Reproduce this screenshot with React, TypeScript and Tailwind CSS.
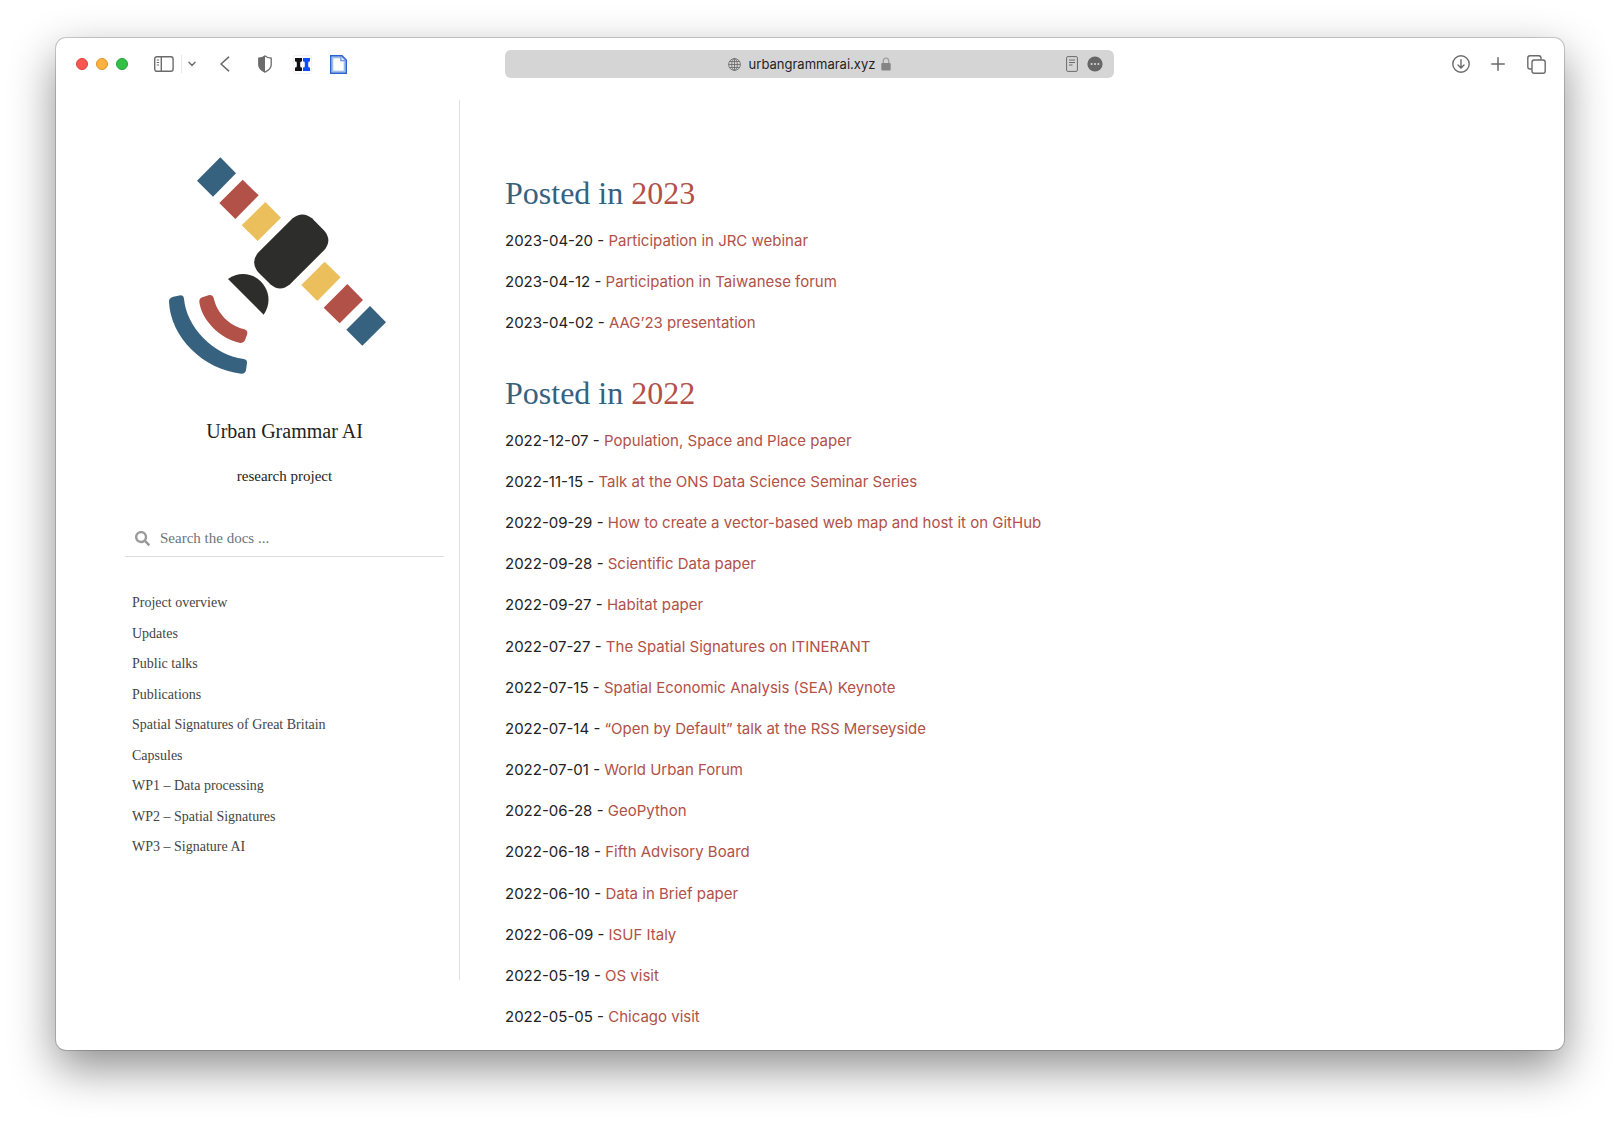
import React from "react";
import { FaSearch } from "react-icons/fa";

type Post = { date: string; title: string };
type Year = { year: string; posts: Post[] };

const years: Year[] = [
  {
    year: "2023",
    posts: [
      { date: "2023-04-20", title: "Participation in JRC webinar" },
      { date: "2023-04-12", title: "Participation in Taiwanese forum" },
      { date: "2023-04-02", title: "AAG’23 presentation" },
    ],
  },
  {
    year: "2022",
    posts: [
      { date: "2022-12-07", title: "Population, Space and Place paper" },
      { date: "2022-11-15", title: "Talk at the ONS Data Science Seminar Series" },
      { date: "2022-09-29", title: "How to create a vector-based web map and host it on GitHub" },
      { date: "2022-09-28", title: "Scientific Data paper" },
      { date: "2022-09-27", title: "Habitat paper" },
      { date: "2022-07-27", title: "The Spatial Signatures on ITINERANT" },
      { date: "2022-07-15", title: "Spatial Economic Analysis (SEA) Keynote" },
      { date: "2022-07-14", title: "“Open by Default” talk at the RSS Merseyside" },
      { date: "2022-07-01", title: "World Urban Forum" },
      { date: "2022-06-28", title: "GeoPython" },
      { date: "2022-06-18", title: "Fifth Advisory Board" },
      { date: "2022-06-10", title: "Data in Brief paper" },
      { date: "2022-06-09", title: "ISUF Italy" },
      { date: "2022-05-19", title: "OS visit" },
      { date: "2022-05-05", title: "Chicago visit" },
    ],
  },
];

const navItems = [
  "Project overview",
  "Updates",
  "Public talks",
  "Publications",
  "Spatial Signatures of Great Britain",
  "Capsules",
  "WP1 – Data processing",
  "WP2 – Spatial Signatures",
  "WP3 – Signature AI",
];

function Logo() {
  return (
    <svg viewBox="57 51 696 651" className="h-[217px] w-[232px]" role="img" aria-label="Satellite logo">
      <g fill="#36617f">
        <path d="M211 52 258 100 189 170 141 122Z" />
        <path d="M660 498 708 547 637 617 589 569Z" />
        <path d="M70 470 92 466Q100 466 102 476C109 560 190 646 281 657Q292 659 291 669L288 691Q285 702 274 701C160 690 60 590 57 484Q57 473 70 470Z" />
      </g>
      <g fill="#b15147">
        <path d="M278 119 326 166 256 237 208 189Z" />
        <path d="M592 432 639 480 569 550 521 503Z" />
        <path d="M157 472 178 465Q188 464 191 474C201 520 237 556 283 568Q293 571 292 581L285 601Q281 610 271 609C210 597 155 540 148 486Q147 476 157 472Z" />
      </g>
      <g fill="#ebc05c">
        <path d="M346 186 393 233 323 303 275 256Z" />
        <path d="M524 365 572 412 502 483 454 435Z" />
      </g>
      <g fill="#2d2d2b">
        <path d="M428 235Q457 212 486 235L523 272Q547 300 523 330L420 433Q390 458 361 433L324 396Q301 367 324 338Z" />
        <path d="M234 417C263 396 303 396 331 423C359 451 364 491 341 524Z" />
      </g>
    </svg>
  );
}

const iconButton = "flex items-center justify-center text-[#6b6b6b]";

function Toolbar() {
  return (
    <header className="grid h-[52px] grid-cols-[minmax(0,1fr)_minmax(0,609px)_minmax(0,1fr)] items-center pr-px">
      <div className="flex items-center pl-5">
        <div className="flex gap-2">
          <button aria-label="Close" className="size-3 rounded-full border border-[#d9413b] bg-[#fc5650]" />
          <button aria-label="Minimize" className="size-3 rounded-full border border-[#d9922e] bg-[#fdb33e]" />
          <button aria-label="Zoom" className="size-3 rounded-full border border-[#23a035] bg-[#30c146]" />
        </div>
        <button aria-label="Toggle sidebar" className={iconButton + " ml-[26px]"}>
          <svg width="20" height="16" viewBox="0 0 20 16" fill="none" stroke="currentColor" strokeWidth="1.4">
            <rect x="0.7" y="0.7" width="18.4" height="14.6" rx="2.2" />
            <path d="M7.3 1v14" />
            <path d="M2.7 4h2.4M2.7 6.5h2.4M2.7 9h2.4" strokeWidth="1" />
          </svg>
        </button>
        <span className="ml-[7px] h-[18px] w-px bg-[#e8e8e8]" />
        <button aria-label="Tab groups" className={iconButton + " ml-1.5"}>
          <svg width="8" height="6" viewBox="0 0 8 6" fill="none" stroke="currentColor" strokeWidth="1.4" strokeLinecap="round" strokeLinejoin="round">
            <path d="M1 1.3 4 4.5 7 1.3" />
          </svg>
        </button>
        <button aria-label="Back" className={iconButton + " ml-6"}>
          <svg width="10" height="16" viewBox="0 0 10 16" fill="none" stroke="currentColor" strokeWidth="1.6" strokeLinecap="round" strokeLinejoin="round">
            <path d="M8.6 1.2 1 8l7.6 6.8" />
          </svg>
        </button>
        <button aria-label="Privacy report" className={iconButton + " ml-7"}>
          <svg width="14" height="18" viewBox="0 0 14 18">
            <path d="M7 .9C8.7 2.2 10.9 2.9 13.2 3.1V9.8C13.2 13 10.5 15.6 7 17.1 3.5 15.6.8 13 .8 9.8V3.1C3.1 2.9 5.3 2.2 7 .9Z" fill="none" stroke="currentColor" strokeWidth="1.3" />
            <path d="M7 .9V17.1C3.5 15.6.8 13 .8 9.8V3.1C3.1 2.9 5.3 2.2 7 .9Z" fill="currentColor" />
          </svg>
        </button>
        <button aria-label="Reference extension" className={iconButton + " ml-[21px]"}>
          <svg width="19" height="19" viewBox="0 0 19 19">
            <rect x="0.5" y="0.5" width="18" height="18" rx="1" fill="#fff" stroke="#ececec" strokeWidth="0.7" />
            <path d="M2 3h7v3.4H7.7L7.2 8v3l.5 1.5H9V16H2v-3.500h1.300L3.800 11V8l-.5-1.600H2Z" fill="#111" />
            <path d="M10 3h7v3.400h-1.300L15.200 8v3l.5 1.500H17V16h-7v-3.500h1.300l.5-1.500V8l-.5-1.600H10Z" fill="#0a50ff" />
          </svg>
        </button>
        <button aria-label="Page extension" className={iconButton + " ml-[18px]"}>
          <svg width="17" height="19" viewBox="0 0 17 19">
            <path d="M.7.7H12L16.300 5V18.300H.7Z" fill="#b5cdf3" stroke="#2a62d0" strokeWidth="1.4" />
            <path d="M2.800 2.800H10.500V6H14.200V16.200H2.800Z" fill="#fff" stroke="#86a5de" strokeWidth="0.8" />
            <path d="M11 1.200V5.500H15.800Z" fill="#dfe9fb" stroke="#5d8ae0" strokeWidth="0.8" />
          </svg>
        </button>
      </div>

      <div className="grid h-7 grid-cols-[1fr_auto_1fr] items-center rounded-md bg-[#d5d5d5] px-[11px]">
        <div className="col-start-2 flex items-center">
          <svg width="13" height="13" viewBox="0 0 13 13" fill="none" stroke="#6e6e6e" strokeWidth="0.9" aria-hidden="true">
            <circle cx="6.5" cy="6.5" r="5.9" />
            <ellipse cx="6.5" cy="6.5" rx="2.8" ry="5.9" />
            <path d="M6.5.6v11.8M.6 6.5h11.8M1.600 3.500h9.800M1.600 9.500h9.800" />
          </svg>
          <a href="#" className="ml-2 font-[Inter,sans-serif] text-[13px] leading-5 text-[#1e1e1e]">urbangrammarai.xyz</a>
          <svg className="ml-1.5" width="10" height="14" viewBox="0 0 10 14" aria-hidden="true">
            <path d="M2.300 6.500V4a2.700 2.900 0 0 1 5.400 0v2.500" fill="none" stroke="#a0a0a0" strokeWidth="1.4" />
            <rect x="0.3" y="6" width="9.4" height="7.5" rx="1" fill="#858585" />
          </svg>
        </div>
        <div className="flex items-center justify-end gap-[9px]">
          <button aria-label="Show reader" className={iconButton}>
            <svg width="12" height="16" viewBox="0 0 12 16" fill="none" stroke="currentColor" strokeWidth="1">
              <rect x="0.6" y="0.6" width="10.8" height="14.8" rx="1.3" />
              <path d="M3 4h6M3 6.500h6M3 9h3.500" />
            </svg>
          </button>
          <button aria-label="Page settings" className={iconButton}>
            <svg width="16" height="16" viewBox="0 0 16 16">
              <circle cx="8" cy="8" r="7.6" fill="#666" />
              <g fill="#d5d5d5">
                <circle cx="4.6" cy="8" r="1.1" />
                <circle cx="8" cy="8" r="1.1" />
                <circle cx="11.4" cy="8" r="1.1" />
              </g>
            </svg>
          </button>
        </div>
      </div>

      <div className="flex items-center justify-end pr-[17px]">
        <button aria-label="Downloads" className={iconButton}>
          <svg width="18" height="18" viewBox="0 0 18 18" fill="none" stroke="currentColor" strokeWidth="1.4" strokeLinecap="round" strokeLinejoin="round">
            <circle cx="9" cy="9" r="8.2" />
            <path d="M9 4.800v8M6 9.900l3 3 3-3" />
          </svg>
        </button>
        <button aria-label="New tab" className={iconButton + " ml-[21px]"}>
          <svg width="14" height="14" viewBox="0 0 14 14" fill="none" stroke="currentColor" strokeWidth="1.5" strokeLinecap="round">
            <path d="M7 .8v12.400M.8 7h12.400" />
          </svg>
        </button>
        <button aria-label="Tab overview" className={iconButton + " ml-[22px]"}>
          <svg width="19" height="19" viewBox="0 0 19 19" fill="none" stroke="currentColor" strokeWidth="1.4" strokeLinejoin="round">
            <rect x="5" y="5" width="13.2" height="13.2" rx="2.2" />
            <path d="M4.800 14H3A2.200 2.200 0 0 1 .8 11.800V3A2.200 2.200 0 0 1 3 .8h8.800A2.200 2.200 0 0 1 14 3v1.800" />
          </svg>
        </button>
      </div>
    </header>
  );
}

function Sidebar() {
  return (
    <aside className="mt-2.5 mb-[70px] w-[404px] shrink-0 border-r border-[#dedede] pt-[57px] pr-[15px] pl-[69px] font-['Liberation_Serif',serif]">
      <div className="flex flex-col items-center text-[#222]">
        <Logo />
        <h1 className="mt-[42px] text-[20px] leading-[30px]">Urban Grammar AI</h1>
        <p className="mt-[18px] text-[15px] leading-6">research project</p>
      </div>
      <form className="mt-8 flex h-[37px] items-center border-b border-[#dcdcdc] pl-2.5">
        <label htmlFor="search" aria-label="Search">
          <FaSearch className="size-[15px] text-[#9a9a9a]" />
        </label>
        <input
          id="search"
          type="text"
          placeholder="Search the docs ..."
          className="ml-2.5 w-full min-w-0 flex-1 bg-transparent text-[15px] leading-6 outline-none placeholder:text-[#6c757d]"
        />
      </form>
      <nav className="mt-[34px] pl-[7px]">
        <ul className="flex flex-col gap-1.5 text-[14px] leading-[1.75] text-[#444]">
          {navItems.map((item) => (
            <li key={item}>
              <a href="#">{item}</a>
            </li>
          ))}
        </ul>
      </nav>
    </aside>
  );
}

export default function App() {
  return (
    <div className="flex min-h-screen bg-white px-14 pt-[38px] pb-[74px]">
      <div className="flex min-w-0 flex-1 flex-col rounded-[10px] bg-white shadow-[0_0_0_1px_rgba(0,0,0,0.18),0_18px_46px_rgba(0,0,0,0.45)]">
        <Toolbar />
        <div className="flex flex-1">
          <Sidebar />
          <main className="min-w-0 flex-1 pt-[85px] pl-[45px] font-[Inter,sans-serif] text-[15px] text-[#222]">
            {years.map(({ year, posts }) => (
              <section key={year} className="mb-[39px] last:mb-0">
                <h2 className="font-['Liberation_Serif',serif] text-[32px] leading-9 text-[#36617f]">
                  Posted in <a href="#" className="text-[#b15147]">{year}</a>
                </h2>
                <ul className="mt-[17px] flex flex-col gap-4 leading-[1.68]">
                  {posts.map(({ date, title }) => (
                    <li key={date}>
                      {date} - <a href="#" className="text-[#b15147]">{title}</a>
                    </li>
                  ))}
                </ul>
              </section>
            ))}
          </main>
        </div>
      </div>
    </div>
  );
}
